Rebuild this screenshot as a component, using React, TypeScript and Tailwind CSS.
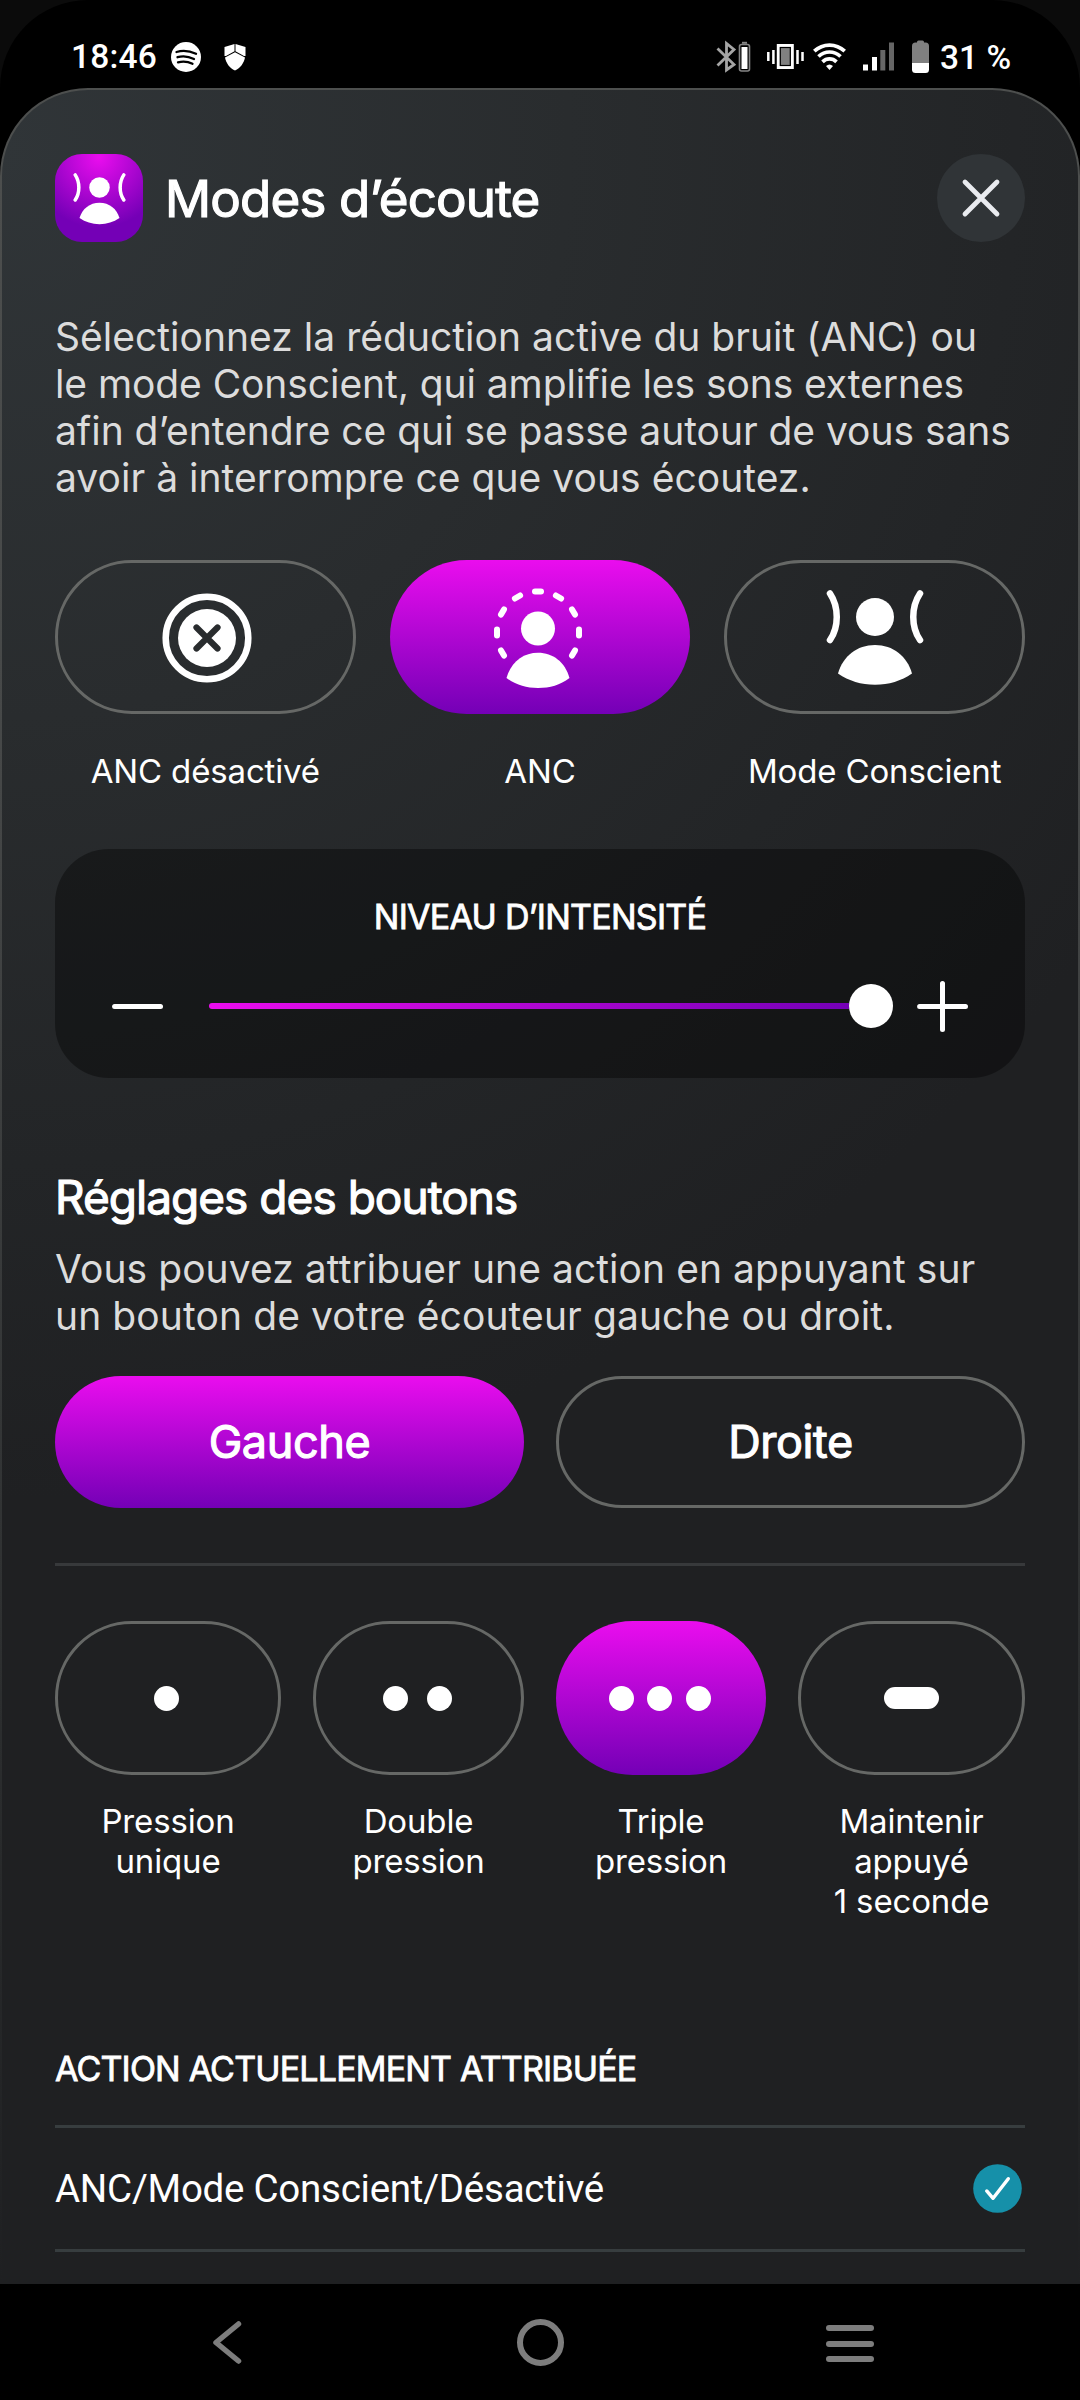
import React from "react";

const RING_ANGLES = [-120, -90, -60, -30, 0, 30, 60, 90, 120];

function AwareIcon({ className }: { className: string }) {
  return (
    <svg className={className} viewBox="0 0 98 100" fill="none">
      <circle cx="49" cy="27" r="19" fill="white" />
      <path d="M12 83.500C17 66 31 55 49 55s32 11 37 28.500C75 91 63 94.700 49 94.700S23 91 12 83.500Z" fill="white" />
      <path d="M4 3.500C13 17 13 37 4 50" stroke="white" strokeWidth="6.500" strokeLinecap="round" />
      <path d="M94 3.500C85 17 85 37 94 50" stroke="white" strokeWidth="6.500" strokeLinecap="round" />
    </svg>
  );
}

function AncIcon() {
  return (
    <svg className="mt-[3px] mr-[3px] h-[104px] w-[96px]" viewBox="0 0 96 104" fill="none">
      {RING_ANGLES.map((a) => (
        <path key={a} d="M45 4.500H51" transform={`rotate(${a} 48 45.500)`} stroke="white" strokeWidth="6" strokeLinecap="round" />
      ))}
      <circle cx="48" cy="41.500" r="17" fill="white" />
      <path d="M16.500 91C21 75 33 65.700 48 65.700S75 75 79.500 91C70 98 60 101 48 101S26 98 16.500 91Z" fill="white" />
    </svg>
  );
}

function OffIcon() {
  return (
    <svg className="mt-[1px] ml-[3px] h-[90px] w-[90px]" viewBox="0 0 90 90" fill="none">
      <circle cx="45" cy="45" r="41.300" stroke="white" strokeWidth="6.500" />
      <circle cx="45" cy="45" r="29" fill="white" />
      <path d="M34.500 34.500 55.500 55.500M55.500 34.500 34.500 55.500" stroke="#292c2e" strokeWidth="6.200" strokeLinecap="round" />
    </svg>
  );
}

function StatusBar() {
  return (
    <div className="relative h-[88px] shrink-0 bg-[#0b0b0b]">
      <div className="flex h-[120px] items-start rounded-t-[88px] bg-black pl-[71px]">
        <span className="mt-[37px] w-[85px] font-[Roboto] text-[33.500px] leading-[40px] font-medium tracking-[0.2px]">18:46</span>
        <svg className="mt-[42px] ml-[15px] h-[30px] w-[30px]" viewBox="0 0 30 30" fill="none">
          <circle cx="15" cy="15" r="15" fill="white" />
          <path d="M5.500 10C12 8 19 9 25 11.800M6.500 15.200C12 13.500 18 14.500 23 17M7 20.300C12 19 17 19.500 21.500 21.800" stroke="black" strokeWidth="2.300" strokeLinecap="round" />
        </svg>
        <svg className="mt-[44px] ml-[23px] h-[27px] w-[22px]" viewBox="0 0 22 27">
          <path d="M.500 3 10.500 0V7.300L2 12H.500ZM21.500 3 11.500 0V7.300L20 12H21.500ZM11 8.300 21 13.500C20 19 16.500 24 11 26.500 5.500 24 2 19 1 13.500Z" fill="white" />
        </svg>
        <svg className="mt-[38px] ml-[470px] h-[38px] w-[214px]" viewBox="0 0 214 38" fill="none">
          <path d="M1.500 10.500 18 26.500 10.500 32V5.500L18 11.500 1.500 27.500" stroke="#a5a5a5" strokeWidth="2.800" />
          <rect x="23.500" y="6.500" width="10" height="26.500" rx="2" stroke="#858585" strokeWidth="1.600" />
          <path d="M26 4.800h5" stroke="#858585" strokeWidth="2" />
          <rect x="25.500" y="9" width="6" height="22" fill="white" />
          <rect x="62.300" y="7.500" width="14" height="22" fill="#808080" stroke="white" strokeWidth="3" />
          <rect x="64.300" y="9.500" width="10" height="18" stroke="black" strokeWidth="1.200" />
          <path d="M52.300 14v9M57.400 12v14M81.500 12v14M86.500 14v9" stroke="white" strokeWidth="2.500" />
          <g stroke="white" strokeWidth="3.700">
            <path d="M98.300 13.200C107 5 120 5 128.700 13.200" />
            <path d="M102.500 18.500C109 12.500 118 12.500 124.500 18.500" />
            <path d="M106.500 23.800C110.500 20 116.500 20 120.500 23.800" />
          </g>
          <path d="M110 28C112.500 26 114.500 26 117 28L113.500 32Z" fill="white" />
          <rect x="147" y="26.500" width="5" height="6" fill="white" />
          <rect x="156" y="19" width="5" height="13.500" fill="white" />
          <rect x="164.300" y="12" width="5" height="20.500" fill="#666" />
          <rect x="173" y="4.500" width="5" height="28" fill="#666" />
          <g transform="translate(4.500 0)">
            <path d="M196.500 4.500V4a1.500 1.500 0 0 1 1.500-1.500h4A1.500 1.500 0 0 1 203.500 4v.500h1.500A3.500 3.500 0 0 1 208.500 8V25.500H191.500V8A3.500 3.500 0 0 1 195 4.500Z" fill="#808080" />
            <path d="M191.500 25H208.500V31.500A3.500 3.500 0 0 1 205 35H195A3.500 3.500 0 0 1 191.500 31.500Z" fill="white" />
          </g>
        </svg>
        <span className="mt-[38px] ml-[10px] font-[Roboto] text-[33.500px] leading-[40px] font-medium whitespace-nowrap">31 %</span>
      </div>
    </div>
  );
}

function Pill({ active, children }: { active?: boolean; children: React.ReactNode }) {
  return (
    <button
      className={
        active
          ? "flex h-[154px] w-full items-center justify-center rounded-full bg-linear-to-b/srgb from-[#ea0dee] to-[#7400b6]"
          : "flex h-[154px] w-full items-center justify-center rounded-full border-3 border-[#666866]"
      }
    >
      {children}
    </button>
  );
}

function ModeOption({ label, active, children }: { label: string; active?: boolean; children: React.ReactNode }) {
  return (
    <div className="flex flex-col items-center">
      <Pill active={active}>{children}</Pill>
      <span className="mt-[37px] text-[33px] leading-[40px] tracking-[-0.15px] whitespace-nowrap">{label}</span>
    </div>
  );
}

function PressOption({ lines, active, children }: { lines: string[]; active?: boolean; children: React.ReactNode }) {
  return (
    <div className="flex flex-col items-center">
      <Pill active={active}>{children}</Pill>
      <div className="mt-[26px] text-center text-[33px] leading-[40px] tracking-[-0.15px] whitespace-nowrap">
        {lines.map((l) => (
          <div key={l}>{l}</div>
        ))}
      </div>
    </div>
  );
}

const Dot = () => <span className="block h-[25px] w-[25px] rounded-full bg-white" />;

export default function App() {
  return (
    <div className="flex h-[2400px] w-[1080px] flex-col overflow-hidden bg-black font-[Inter,sans-serif] text-white">
      <StatusBar />

      <main className="relative z-10 h-[2196px] shrink-0 overflow-hidden rounded-t-[88px] bg-[linear-gradient(to_bottom,#4d4f4e,#464848_30%,#2b2d2e_75%,#1f2022)] px-[2px] pt-[2px]">
        <div className="h-full rounded-t-[86px] bg-[radial-gradient(circle_1350px_at_0_60px,#303538,#292c2e_42%,#232527_75%,#1f2022)] px-[53px] pt-[64px]">
          <header className="flex h-[88px] items-center">
            <div className="flex h-[88px] w-[88px] items-center justify-center rounded-[27px] bg-[radial-gradient(circle_70px_at_50%_4%,#ea0dee,#7400b6)]">
              <AwareIcon className="mt-[3px] h-[54px] w-[53px]" />
            </div>
            <h1 className="mt-[2px] ml-[22px] text-[51px] tracking-[-0.8px] whitespace-nowrap [-webkit-text-stroke:1.200px_white]">Modes d’écoute</h1>
            <button className="ml-auto flex h-[88px] w-[88px] items-center justify-center rounded-full bg-[#303437]">
              <svg className="h-[40px] w-[40px]" viewBox="0 0 40 40">
                <path d="M4 4 36 36M36 4 4 36" stroke="#e9ebef" strokeWidth="4.800" strokeLinecap="round" />
              </svg>
            </button>
          </header>

          <p className="mt-[71px] text-[39px] leading-[47px] whitespace-nowrap text-[#dcdcdc]">
            <span className="tracking-[0.02px]">Sélectionnez la réduction active du bruit (ANC) ou</span>
            <br />
            <span className="tracking-[-0.08px]">le mode Conscient, qui amplifie les sons externes</span>
            <br />
            <span className="tracking-[-0.04px]">afin d’entendre ce qui se passe autour de vous sans</span>
            <br />
            <span className="tracking-[0.03px]">avoir à interrompre ce que vous écoutez.</span>
          </p>

          <section className="mt-[59px] grid grid-cols-3 gap-[34px]">
            <ModeOption label="ANC désactivé">
              <OffIcon />
            </ModeOption>
            <ModeOption label="ANC" active>
              <AncIcon />
            </ModeOption>
            <ModeOption label="Mode Conscient">
              <AwareIcon className="mt-[6px] h-[100px] w-[98px]" />
            </ModeOption>
          </section>

          <section className="mt-[58px] h-[229px] rounded-[54px] bg-black/38 pt-[48px]">
            <h2 className="text-center text-[34px] leading-[40px] tracking-[-0.74px] whitespace-nowrap [-webkit-text-stroke:0.800px_white]">NIVEAU D’INTENSITÉ</h2>
            <div className="mt-[41px] flex items-center pr-[56px] pl-[57px]">
              <svg className="h-[56px] w-[52px]" viewBox="0 0 52 56">
                <path d="M2.600 28.500H48.500" stroke="white" strokeWidth="5" strokeLinecap="round" />
              </svg>
              <div className="ml-[45px] flex w-[684px] items-center">
                <div className="h-[6px] w-[640px] rounded-l-full bg-linear-to-r/srgb from-[#ea0dee] to-[#7400b6]" />
                <div className="h-[44px] w-[44px] rounded-full bg-white" />
              </div>
              <svg className="ml-auto h-[56px] w-[52px]" viewBox="0 0 52 56">
                <path d="M2.600 28.500H48.500M25.500 5.500V51.500" stroke="white" strokeWidth="5" strokeLinecap="round" />
              </svg>
            </div>
          </section>

          <section>
            <h2 className="mt-[92px] text-[46px] leading-[54px] tracking-[-0.98px] whitespace-nowrap [-webkit-text-stroke:1.100px_white]">Réglages des boutons</h2>
            <p className="mt-[21px] text-[39px] leading-[47px] whitespace-nowrap text-[#dcdcdc]">
              <span className="tracking-[0.06px]">Vous pouvez attribuer une action en appuyant sur</span>
              <br />
              <span className="tracking-[0.1px]">un bouton de votre écouteur gauche ou droit.</span>
            </p>
            <div className="mt-[37px] grid grid-cols-2 gap-8 text-[45px] tracking-[-0.4px] [-webkit-text-stroke:1.100px_white]">
              <button className="h-[132px] rounded-full bg-linear-to-b/srgb from-[#ea0dee] to-[#7400b6]">Gauche</button>
              <button className="h-[132px] rounded-full border-3 border-[#666866]">Droite</button>
            </div>
          </section>

          <hr className="mt-[55px] border-t-3 border-[#37393b]" />

          <section className="mt-[55px] grid grid-cols-[226px_211px_210px_227px] gap-8">
            <PressOption lines={["Pression", "unique"]}>
              <span className="mr-[4px]">
                <Dot />
              </span>
            </PressOption>
            <PressOption lines={["Double", "pression"]}>
              <span className="mr-[2px] flex gap-[19px]">
                <Dot />
                <Dot />
              </span>
            </PressOption>
            <PressOption lines={["Triple", "pression"]} active>
              <span className="mr-[3px] flex gap-[13.500px]">
                <Dot />
                <Dot />
                <Dot />
              </span>
            </PressOption>
            <PressOption lines={["Maintenir", "appuyé", "1 seconde"]}>
              <span className="mr-[1px] h-[22px] w-[55px] rounded-full bg-white" />
            </PressOption>
          </section>

          <section className="mt-[128px]">
            <h2 className="text-[34px] leading-[40px] tracking-[-0.82px] whitespace-nowrap [-webkit-text-stroke:0.800px_white]">ACTION ACTUELLEMENT ATTRIBUÉE</h2>
            <div className="mt-[36px] flex h-[127px] items-center justify-between border-y-3 border-[#373d3f] pr-[3px]">
              <span className="font-[Roboto] text-[38.500px] tracking-[-0.25px] whitespace-nowrap">ANC/Mode Conscient/Désactivé</span>
              <svg className="h-[49px] w-[49px]" viewBox="0 0 50 50" fill="none">
                <circle cx="25" cy="25" r="24.800" fill="#1690a9" />
                <path d="M14 27.500 20.500 35 36 15" stroke="white" strokeWidth="3.500" strokeLinecap="round" strokeLinejoin="round" />
              </svg>
            </div>
          </section>
        </div>
      </main>

      <nav className="flex h-[116px] shrink-0 items-center bg-black">
        <svg className="ml-[211px] h-[48px] w-[31px]" viewBox="0 0 31 48" fill="none">
          <path d="M27.500 6 5 24.500 27.500 43" stroke="#7d7d7d" strokeWidth="5.500" strokeLinecap="round" strokeLinejoin="round" />
        </svg>
        <span className="ml-[275px] h-[47px] w-[47px] rounded-full border-6 border-[#7d7d7d]" />
        <div className="mt-[3px] ml-[262px] flex flex-col gap-[9.500px]">
          <span className="h-[6px] w-[48px] rounded-full bg-[#7d7d7d]" />
          <span className="h-[6px] w-[48px] rounded-full bg-[#7d7d7d]" />
          <span className="h-[6px] w-[48px] rounded-full bg-[#7d7d7d]" />
        </div>
      </nav>
    </div>
  );
}
